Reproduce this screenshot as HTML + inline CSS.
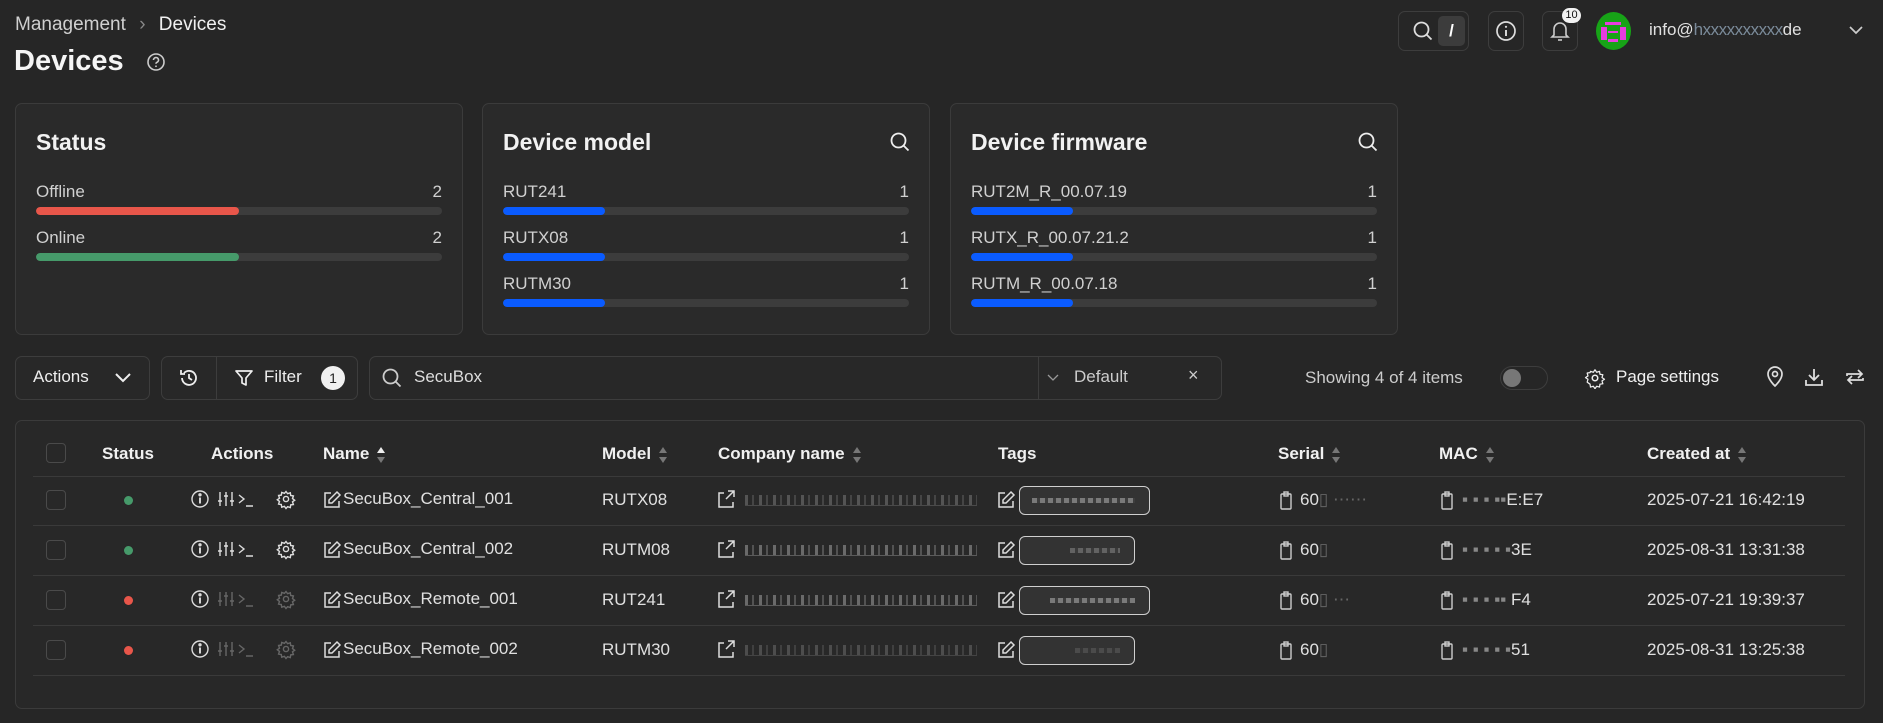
<!DOCTYPE html>
<html><head><meta charset="utf-8"><style>
*{box-sizing:border-box;margin:0;padding:0}
body{width:1883px;height:723px;background:#262626;color:#e6e6e6;font-family:"Liberation Sans",sans-serif;position:relative;overflow:hidden;font-size:17px}
.a{position:absolute}
.card{position:absolute;background:#2a2a2a;border:1px solid #3b3b3b;border-radius:7px}
.ct{position:absolute;left:20px;top:25px;font-size:23px;font-weight:bold;color:#f2f2f2}
.lbl{position:absolute;left:20px;font-size:17px;color:#d0d0d0}
.num{position:absolute;right:20px;font-size:17px;color:#d0d0d0}
.bar{position:absolute;left:20px;right:20px;height:8px;background:#3c3c3c;border-radius:4px;overflow:hidden}
.bar i{display:block;height:100%;border-radius:4px}
.btn{position:absolute;top:356px;height:44px;border:1px solid #3d3d3d;border-radius:7px;background:#282828}
.th{position:absolute;top:444px;font-weight:bold;font-size:17px;color:#f0f0f0}
.line{position:absolute;left:33px;width:1812px;height:1px;background:#3a3a3a}
.cell{position:absolute;font-size:17px;color:#e0e0e0}
.cb{position:absolute;left:46px;width:20px;height:20px;border:1.5px solid #4a4a4a;border-radius:4px}
.dot{position:absolute;left:124px;width:9px;height:9px;border-radius:50%}
.blur{position:absolute;height:11px;background:repeating-linear-gradient(90deg,#bbb 0 3px,#2a2a2a 3px 7px,#888 7px 9px,#2a2a2a 9px 14px);opacity:.45;border-bottom:1px solid #999}
.tag{position:absolute;left:1019px;height:29px;border:1.5px solid #cfcfcf;border-radius:6px;background:#333}
.tag i{position:absolute;left:12px;right:14px;top:11px;height:5px;background:repeating-linear-gradient(90deg,#aaa 0 5px,#444 5px 8px);opacity:.6}
svg{position:absolute}
.srt{display:inline-block;margin-left:8px;vertical-align:middle;width:9px;height:16px;position:relative}
.srt:before{content:"";position:absolute;left:0;top:0;border:4.5px solid transparent;border-bottom:6px solid #777;border-top:0}
.srt:after{content:"";position:absolute;left:0;bottom:0;border:4.5px solid transparent;border-top:6px solid #777;border-bottom:0}
.srt.up:before{border-bottom-color:#eee}
</style></head><body>

<div class="a" style="left:15px;top:14px;font-size:19px;color:#cfcfcf">Management <span style="color:#888;margin:0 8px">›</span> <span style="color:#f0f0f0">Devices</span></div>
<div class="a" style="left:14px;top:45px;font-size:29px;font-weight:bold;color:#f5f5f5">Devices</div>
<svg style="left:146px;top:52px" width="20" height="20" viewBox="0 0 20 20"><circle cx="10" cy="10" r="8" fill="none" stroke="#ccc" stroke-width="1.6"/><path d="M7.5 8a2.5 2.5 0 1 1 3.5 2.3c-.7.3-1 .8-1 1.5" fill="none" stroke="#ccc" stroke-width="1.6"/><circle cx="10" cy="14.3" r=".9" fill="#ccc"/></svg>

<div class="a" style="left:1398px;top:11px;width:71px;height:40px;border:1px solid #3d3d3d;border-radius:7px"></div>
<svg style="left:1412px;top:20px" width="22" height="22" viewBox="0 0 22 22"><circle cx="9.5" cy="9.5" r="7" fill="none" stroke="#ddd" stroke-width="1.8"/><path d="M14.5 14.5l5 5" stroke="#ddd" stroke-width="1.8"/></svg>
<div class="a" style="left:1438px;top:16px;width:27px;height:30px;background:#3c3c3c;border-radius:5px;color:#fff;font-size:17px;font-weight:bold;text-align:center;line-height:30px">/</div>
<div class="a" style="left:1488px;top:11px;width:36px;height:40px;border:1px solid #3d3d3d;border-radius:7px"></div>
<svg style="left:1495px;top:20px" width="22" height="22" viewBox="0 0 22 22"><circle cx="11" cy="11" r="9" fill="none" stroke="#ddd" stroke-width="1.7"/><path d="M11 10v6" stroke="#ddd" stroke-width="1.9"/><circle cx="11" cy="6.8" r="1.1" fill="#ddd"/></svg>
<div class="a" style="left:1542px;top:11px;width:36px;height:40px;border:1px solid #3d3d3d;border-radius:7px"></div>
<svg style="left:1549px;top:19px" width="22" height="24" viewBox="0 0 22 24"><path d="M5 16V10a6 6 0 0 1 12 0v6l2 2H3z" fill="none" stroke="#ccc" stroke-width="1.6"/><path d="M9 21h4" stroke="#ccc" stroke-width="1.6"/></svg>
<div class="a" style="left:1562px;top:8px;width:19px;height:15px;background:#f2f2f2;border-radius:8px;color:#111;font-size:11px;text-align:center;line-height:15px">10</div>
<div class="a" style="left:1596px;top:12px;width:35px;height:38px;border-radius:50%;background:#17a317"></div>
<div class="a" style="left:1601px;top:27px;width:6px;height:13px;background:#e83ce0"></div>
<div class="a" style="left:1620px;top:27px;width:6px;height:13px;background:#e83ce0"></div>
<div class="a" style="left:1605px;top:22px;width:16px;height:3px;background:#e83ce0"></div>
<div class="a" style="left:1608px;top:31px;width:10px;height:2px;background:#e83ce0"></div>
<div class="a" style="left:1608px;top:39px;width:10px;height:3px;background:#e83ce0"></div>
<div class="a" style="left:1649px;top:20px;font-size:17px;color:#e0e0e0">info@<span style="color:#7a8a99;letter-spacing:-0.5px">hxxxxxxxxxx</span>de</div>
<svg style="left:1848px;top:24px" width="16" height="12" viewBox="0 0 16 12"><path d="M2 3l6 6 6-6" fill="none" stroke="#ccc" stroke-width="1.7"/></svg>

<div class="card" style="left:15px;top:103px;width:448px;height:232px">
 <div class="ct">Status</div>
 <div class="lbl" style="top:78px">Offline</div><div class="num" style="top:78px">2</div>
 <div class="bar" style="top:103px"><i style="width:50%;background:#e8564a"></i></div>
 <div class="lbl" style="top:124px">Online</div><div class="num" style="top:124px">2</div>
 <div class="bar" style="top:149px"><i style="width:50%;background:#469a6a"></i></div>
</div>
<div class="card" style="left:482px;top:103px;width:448px;height:232px">
 <div class="ct">Device model</div>
 <svg style="right:18px;top:27px" width="22" height="22" viewBox="0 0 22 22"><circle cx="9.5" cy="9.5" r="7" fill="none" stroke="#eee" stroke-width="1.8"/><path d="M14.5 14.5l5 5" stroke="#eee" stroke-width="1.8"/></svg>
 <div class="lbl" style="top:78px">RUT241</div><div class="num" style="top:78px">1</div>
 <div class="bar" style="top:103px"><i style="width:25%;background:#0a5bff"></i></div>
 <div class="lbl" style="top:124px">RUTX08</div><div class="num" style="top:124px">1</div>
 <div class="bar" style="top:149px"><i style="width:25%;background:#0a5bff"></i></div>
 <div class="lbl" style="top:170px">RUTM30</div><div class="num" style="top:170px">1</div>
 <div class="bar" style="top:195px"><i style="width:25%;background:#0a5bff"></i></div>
</div>
<div class="card" style="left:950px;top:103px;width:448px;height:232px">
 <div class="ct">Device firmware</div>
 <svg style="right:18px;top:27px" width="22" height="22" viewBox="0 0 22 22"><circle cx="9.5" cy="9.5" r="7" fill="none" stroke="#eee" stroke-width="1.8"/><path d="M14.5 14.5l5 5" stroke="#eee" stroke-width="1.8"/></svg>
 <div class="lbl" style="top:78px">RUT2M_R_00.07.19</div><div class="num" style="top:78px">1</div>
 <div class="bar" style="top:103px"><i style="width:25%;background:#0a5bff"></i></div>
 <div class="lbl" style="top:124px">RUTX_R_00.07.21.2</div><div class="num" style="top:124px">1</div>
 <div class="bar" style="top:149px"><i style="width:25%;background:#0a5bff"></i></div>
 <div class="lbl" style="top:170px">RUTM_R_00.07.18</div><div class="num" style="top:170px">1</div>
 <div class="bar" style="top:195px"><i style="width:25%;background:#0a5bff"></i></div>
</div>

<div class="btn" style="left:15px;width:135px"></div>
<div class="a" style="left:33px;top:367px;font-size:17px;color:#eee">Actions</div>
<svg style="left:114px;top:371px" width="18" height="14" viewBox="0 0 18 14"><path d="M2 3l7 7 7-7" fill="none" stroke="#eee" stroke-width="2"/></svg>
<div class="btn" style="left:161px;width:197px"></div>
<div class="a" style="left:216px;top:357px;width:1px;height:42px;background:#3d3d3d"></div>
<svg style="left:178px;top:367px" width="22" height="22" viewBox="0 0 22 22"><path d="M4 11a7 7 0 1 0 2-5" fill="none" stroke="#eee" stroke-width="1.8"/><path d="M3 3v4h4" fill="none" stroke="#eee" stroke-width="1.8"/><path d="M11 7v4l3 2" fill="none" stroke="#eee" stroke-width="1.8"/></svg>
<svg style="left:234px;top:368px" width="20" height="20" viewBox="0 0 20 20"><path d="M2 3h16l-6 7v7l-4-2v-5z" fill="none" stroke="#eee" stroke-width="1.7" stroke-linejoin="round"/></svg>
<div class="a" style="left:264px;top:367px;font-size:17px;color:#eee">Filter</div>
<div class="a" style="left:321px;top:366px;width:24px;height:24px;border-radius:50%;background:#f0f0f0;color:#222;font-size:14px;text-align:center;line-height:24px">1</div>
<div class="btn" style="left:369px;width:853px"></div>
<div class="a" style="left:1038px;top:357px;width:1px;height:42px;background:#3d3d3d"></div>
<svg style="left:381px;top:367px" width="22" height="22" viewBox="0 0 22 22"><circle cx="9.5" cy="9.5" r="7" fill="none" stroke="#ccc" stroke-width="1.8"/><path d="M14.5 14.5l5 5" stroke="#ccc" stroke-width="1.8"/></svg>
<div class="a" style="left:414px;top:367px;font-size:17px;color:#ddd">SecuBox</div>
<svg style="left:1047px;top:373px" width="12" height="10" viewBox="0 0 12 10"><path d="M1 2l5 5 5-5" fill="none" stroke="#999" stroke-width="1.3"/></svg>
<div class="a" style="left:1074px;top:367px;font-size:17px;color:#ccc">Default</div>
<div class="a" style="left:1188px;top:365px;font-size:18px;color:#ccc">×</div>
<div class="a" style="left:1305px;top:368px;font-size:17px;color:#ccc">Showing 4 of 4 items</div>
<div class="a" style="left:1500px;top:366px;width:48px;height:24px;border:1px solid #3d3d3d;border-radius:12px"></div>
<div class="a" style="left:1503px;top:369px;width:18px;height:18px;border-radius:50%;background:#777"></div>
<svg style="left:1584px;top:367px" width="22" height="22" viewBox="0 0 24 24"><circle cx="12" cy="12" r="3" fill="none" stroke="#eee" stroke-width="1.7"/><path d="M12 2l2 3 3.5-1 .5 3.5 3.5.5-1 3.5 3 2-3 2 1 3.5-3.5.5-.5 3.5-3.5-1-2 3-2-3-3.5 1-.5-3.5L2.5 17l1-3.5-3-2 3-2-1-3.5 3.5-.5L6.5 4 10 5z" fill="none" stroke="#eee" stroke-width="1.5" stroke-linejoin="round" transform="translate(1.2 1.2) scale(.9)"/></svg>
<div class="a" style="left:1616px;top:367px;font-size:17px;color:#f0f0f0">Page settings</div>
<svg style="left:1765px;top:366px" width="20" height="22" viewBox="0 0 20 22"><path d="M10 20s7-6.5 7-12a7 7 0 0 0-14 0c0 5.5 7 12 7 12z" fill="none" stroke="#ddd" stroke-width="1.7"/><circle cx="10" cy="8" r="2.5" fill="none" stroke="#ddd" stroke-width="1.7"/></svg>
<svg style="left:1803px;top:366px" width="22" height="22" viewBox="0 0 22 22"><path d="M3 14v5h16v-5M11 3v11M6 9l5 5 5-5" fill="none" stroke="#ddd" stroke-width="1.8"/></svg>
<svg style="left:1844px;top:366px" width="22" height="22" viewBox="0 0 22 22"><path d="M3 10V8h15M14 4l4 4-4 4M19 12v2H4M8 18l-4-4 4-4" fill="none" stroke="#ddd" stroke-width="1.7"/></svg>

<div class="card" style="left:15px;top:420px;width:1850px;height:289px;background:#282828"></div>
<div class="cb" style="top:443px"></div>
<div class="th" style="left:102px">Status</div>
<div class="th" style="left:211px">Actions</div>
<div class="th" style="left:323px">Name<span class="srt up"></span></div>
<div class="th" style="left:602px">Model<span class="srt"></span></div>
<div class="th" style="left:718px">Company name<span class="srt"></span></div>
<div class="th" style="left:998px">Tags</div>
<div class="th" style="left:1278px">Serial<span class="srt"></span></div>
<div class="th" style="left:1439px">MAC<span class="srt"></span></div>
<div class="th" style="left:1647px">Created at<span class="srt"></span></div>
<div class="line" style="top:476px"></div>
<div class="line" style="top:525px"></div>
<div class="line" style="top:575px"></div>
<div class="line" style="top:625px"></div>
<div class="line" style="top:675px"></div>

<div class="cb" style="top:490px"></div><div class="cb" style="top:540px"></div><div class="cb" style="top:590px"></div><div class="cb" style="top:640px"></div>
<div class="dot" style="top:496px;background:#469a6a"></div><div class="dot" style="top:546px;background:#469a6a"></div>
<div class="dot" style="top:596px;background:#e8564a"></div><div class="dot" style="top:646px;background:#e8564a"></div>

<svg style="left:190px;top:489px" width="140" height="175" viewBox="0 0 140 175">
 <defs>
  <g id="gear" fill="none"><circle cx="96" cy="10" r="2.6"/><path d="M96 2.5l1.6 2.2 2.7-.9.4 2.7 2.7.4-.9 2.7 2.2 1.6-2.2 1.6.9 2.7-2.7.4-.4 2.7-2.7-.9L96 19.5l-1.6-2.2-2.7.9-.4-2.7-2.7-.4.9-2.7-2.2-1.6 2.2-1.6-.9-2.7 2.7-.4.4-2.7 2.7.9z" transform="translate(0 0)"/></g>
  <g id="sl" fill="none"><path d="M30 3v14M36 3v14M42 3v14M28 12h4M34 7h4M40 12h4"/><path d="M49 6l5 4-5 4M56 17h7"/></g>
  <g id="inf" fill="none"><circle cx="10" cy="10" r="8"/><path d="M10 8.5v6" stroke-width="1.9"/></g>
 </defs>
 <g stroke="#ddd" stroke-width="1.4"><use href="#inf"/><circle cx="10" cy="5.8" r="1" fill="#ddd"/><use href="#sl"/><use href="#gear"/></g>
 <g transform="translate(0 50)" stroke="#ddd" stroke-width="1.4"><use href="#inf"/><circle cx="10" cy="5.8" r="1" fill="#ddd"/><use href="#sl"/><use href="#gear"/></g>
 <g transform="translate(0 100)" stroke-width="1.4"><g stroke="#ddd"><use href="#inf"/><circle cx="10" cy="5.8" r="1" fill="#ddd"/></g><g stroke="#666"><use href="#sl"/><use href="#gear"/></g></g>
 <g transform="translate(0 150)" stroke-width="1.4"><g stroke="#ddd"><use href="#inf"/><circle cx="10" cy="5.8" r="1" fill="#ddd"/></g><g stroke="#666"><use href="#sl"/><use href="#gear"/></g></g>
</svg>

<svg style="left:322px;top:490px" width="20" height="170" viewBox="0 0 20 170" fill="none" stroke="#ddd" stroke-width="1.5">
 <g id="ed"><path d="M9 3H3v14h14v-6"/><path d="M15 2l3 3-8 8H7v-3z"/></g>
 <use href="#ed" y="50"/><use href="#ed" y="100"/><use href="#ed" y="150"/>
</svg>
<svg style="left:996px;top:490px" width="20" height="170" viewBox="0 0 20 170" fill="none" stroke="#ddd" stroke-width="1.5">
 <use href="#ed"/><use href="#ed" y="50"/><use href="#ed" y="100"/><use href="#ed" y="150"/>
</svg>
<svg style="left:716px;top:489px" width="20" height="170" viewBox="0 0 20 170" fill="none" stroke="#ddd" stroke-width="1.5">
 <g id="lk"><path d="M8 4H3v14h14v-5"/><path d="M12 2h6v6M18 2l-8 8"/></g>
 <use href="#lk" y="50"/><use href="#lk" y="100"/><use href="#lk" y="150"/>
</svg>
<svg style="left:1278px;top:490px" width="18" height="170" viewBox="0 0 18 170" fill="none" stroke="#ccc" stroke-width="1.4">
 <g id="cp"><rect x="3" y="4" width="10" height="15" rx="1"/><rect x="6" y="2" width="4" height="4"/></g>
 <use href="#cp" y="50"/><use href="#cp" y="100"/><use href="#cp" y="150"/>
</svg>
<svg style="left:1439px;top:490px" width="18" height="170" viewBox="0 0 18 170" fill="none" stroke="#ccc" stroke-width="1.4">
 <use href="#cp"/><use href="#cp" y="50"/><use href="#cp" y="100"/><use href="#cp" y="150"/>
</svg>

<div class="cell" style="left:343px;top:489px">SecuBox_Central_001</div>
<div class="cell" style="left:343px;top:539px">SecuBox_Central_002</div>
<div class="cell" style="left:343px;top:589px">SecuBox_Remote_001</div>
<div class="cell" style="left:343px;top:639px">SecuBox_Remote_002</div>
<div class="cell" style="left:602px;top:490px">RUTX08</div>
<div class="cell" style="left:602px;top:540px">RUTM08</div>
<div class="cell" style="left:602px;top:590px">RUT241</div>
<div class="cell" style="left:602px;top:640px">RUTM30</div>

<div class="blur" style="left:745px;top:495px;width:232px;opacity:.3"></div>
<div class="blur" style="left:745px;top:545px;width:232px"></div>
<div class="blur" style="left:745px;top:595px;width:232px"></div>
<div class="blur" style="left:745px;top:645px;width:232px;opacity:.25"></div>

<div class="tag" style="top:486px;width:131px"><i></i></div>
<div class="tag" style="top:536px;width:116px"><i style="left:50px;opacity:.4"></i></div>
<div class="tag" style="top:586px;width:131px"><i style="left:30px"></i></div>
<div class="tag" style="top:636px;width:116px"><i style="left:55px;opacity:.2"></i></div>

<div class="cell" style="left:1300px;top:490px">60<span style="color:#666">▯ ⋯⋯</span></div>
<div class="cell" style="left:1300px;top:540px">60<span style="color:#666">▯</span></div>
<div class="cell" style="left:1300px;top:590px">60<span style="color:#666">▯ ⋯</span></div>
<div class="cell" style="left:1300px;top:640px">60<span style="color:#666">▯</span></div>
<div class="cell" style="left:1462px;top:490px;color:#888">▪ ▪ ▪ ▪▪<span style="color:#e0e0e0">E:E7</span></div>
<div class="cell" style="left:1462px;top:540px;color:#888">▪ ▪ ▪ ▪ ▪<span style="color:#e0e0e0">3E</span></div>
<div class="cell" style="left:1462px;top:590px;color:#888">▪ ▪ ▪ ▪▪ <span style="color:#e0e0e0">F4</span></div>
<div class="cell" style="left:1462px;top:640px;color:#888">▪ ▪ ▪ ▪ ▪<span style="color:#e0e0e0">51</span></div>

<div class="cell" style="left:1647px;top:490px">2025-07-21 16:42:19</div>
<div class="cell" style="left:1647px;top:540px">2025-08-31 13:31:38</div>
<div class="cell" style="left:1647px;top:590px">2025-07-21 19:39:37</div>
<div class="cell" style="left:1647px;top:640px">2025-08-31 13:25:38</div>
</body></html>
